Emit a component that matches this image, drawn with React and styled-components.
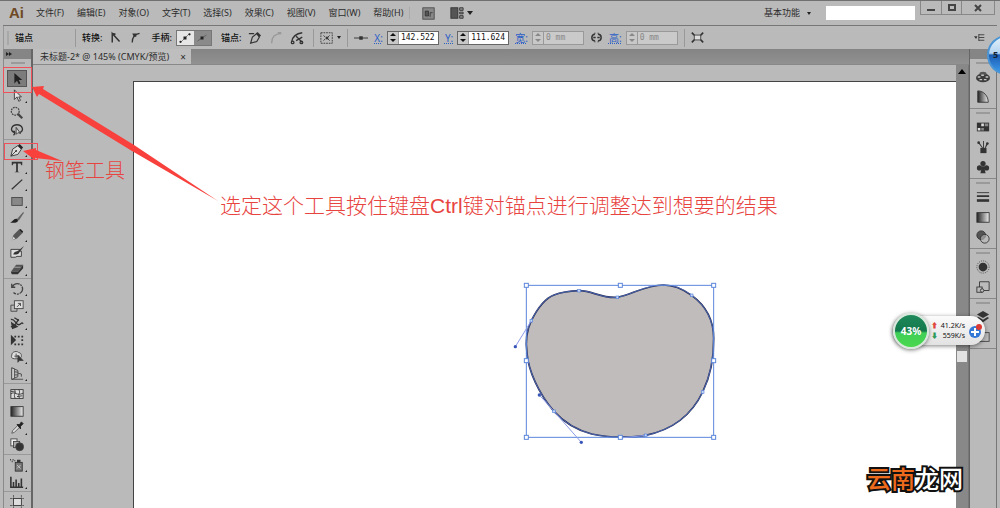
import React from 'react'
import styled, { createGlobalStyle } from 'styled-components'

const menus = ['文件(F)', '编辑(E)', '对象(O)', '文字(T)', '选择(S)', '效果(C)', '视图(V)', '窗口(W)', '帮助(H)']

// flyout: little corner mark for tools with a hidden group
const toolGroups = [
  [
    { icon: 'select', label: '选择工具', active: true },
    { icon: 'direct', label: '直接选择工具', flyout: true },
    { icon: 'wand', label: '魔棒工具' },
    { icon: 'lasso', label: '套索工具' },
  ],
  [
    { icon: 'pen', label: '钢笔工具', flyout: true },
    { icon: 'type', label: '文字工具', flyout: true },
    { icon: 'line', label: '直线段工具', flyout: true },
    { icon: 'rect', label: '矩形工具', flyout: true },
    { icon: 'brush', label: '画笔工具' },
    { icon: 'pencil', label: '铅笔工具', flyout: true },
    { icon: 'blob', label: '斑点画笔工具' },
    { icon: 'eraser', label: '橡皮擦工具', flyout: true },
  ],
  [
    { icon: 'rotate', label: '旋转工具', flyout: true },
    { icon: 'scale', label: '比例缩放工具', flyout: true },
    { icon: 'width', label: '宽度工具', flyout: true },
    { icon: 'transform', label: '自由变换工具' },
    { icon: 'shape', label: '形状生成器工具', flyout: true },
    { icon: 'perspective', label: '透视网格工具', flyout: true },
  ],
  [
    { icon: 'mesh', label: '网格工具' },
    { icon: 'gradient', label: '渐变工具' },
    { icon: 'dropper', label: '吸管工具', flyout: true },
    { icon: 'blend', label: '混合工具' },
  ],
  [
    { icon: 'spray', label: '符号喷枪工具', flyout: true },
    { icon: 'graph', label: '柱形图工具', flyout: true },
  ],
  [{ icon: 'artboard', label: '画板工具' }],
]

const panelGroups = [
  [['palette', '颜色'], ['guide', '颜色参考']],
  [['swatches', '色板'], ['brushes', '画笔'], ['club', '符号']],
  [['stroke', '描边'], ['gradient', '渐变'], ['opacity', '透明度']],
  [['appearance', '外观'], ['styles', '图形样式']],
  [['layers', '图层'], ['artboards', '画板']],
]

const icons = {
  select: <path d="M5 1v12l3-3 2 4 2-1-2-4h4z" fill="#222" />,
  direct: <path d="M5 1v11l3-3 2 5 2-1-2-4h3z" fill="#e4e4e4" stroke="#333" />,
  wand: <g stroke="#444" fill="none"><circle cx="6" cy="6" r="4.5" strokeWidth="1.4" strokeDasharray="2 1" /><path d="M9 9l5 5" strokeWidth="2.6" /></g>,
  lasso: <g stroke="#333" strokeWidth="1.5" fill="none"><path d="M5 11C-1 9 2 2 8 2s9 7 3 9M4 9c2 1 2 3 0 5" /><path d="M7 5v8l2-2 3 1z" fill="#ddd" strokeWidth="1" /></g>,
  pen: <g><path d="M1 15L3 7l6-4 4 4-4 6z" fill="#ddd" stroke="#333" /><path d="M9 3l2-2 4 4-2 2z" fill="#222" /><path d="M1 15l6-6" stroke="#333" /><circle cx="7" cy="9" r="1" fill="#222" /></g>,
  type: <path d="M2 2h12v4h-1l-1-2H9v9l2 1H5l2-1V4H4L3 6H2z" fill="#333" />,
  line: <path d="M2 14L14 3" stroke="#333" strokeWidth="1.5" />,
  rect: <rect x="2" y="4" width="12" height="9" fill="#888" stroke="#444" />,
  brush: <g><path d="M8 9l7-8 1 1-6 9z" fill="#666" /><path d="M0 13c3 0 4-5 8-4 3 2 0 6-8 4z" fill="#222" /></g>,
  pencil: <g><path d="M2 14l2-6 6-6 4 4-6 6z" fill="#555" /><path d="M10 2l2-1 3 3-1 2z" fill="#222" /><path d="M2 14l2-4 2 2z" fill="#ddd" /></g>,
  blob: <g><path d="M1 5h10v2h2v6H8l-2 1H1z" fill="#ddd" stroke="#333" /><path d="M4 11c0-4 4-3 6-5l6-5-5 7c-1 3-4 3-7 3z" fill="#333" /></g>,
  eraser: <g><path d="M1 11l6-8h8l-6 8z" fill="#555" /><path d="M1 11h8l6-8v4l-6 7H2z" fill="#333" /><path d="M5 6h7" stroke="#aaa" /></g>,
  rotate: <path d="M3 5a6 6 0 1 1 1 7M2 2v4h4" fill="none" stroke="#444" strokeWidth="1.5" strokeDasharray="9 1 2 1" />,
  scale: <g fill="none" stroke="#444"><path d="M1 7h7v7H1z" /><rect x="5" y="2" width="10" height="9" fill="#ddd" /><path d="M8 9l4-4M9 5h3v3" /></g>,
  width: <g fill="none" stroke="#333" strokeWidth="1.5"><path d="M1 4c5-1 5 6 9 6 3 0 3-4 5-1M1 12c4 2 6-5 9-8" /><path d="M2 8l6 4-5 2z" fill="#333" /><path d="M5 2l5 3" /></g>,
  transform: <g fill="#333"><path d="M1 2v12l6-6z" /><path d="M5 3h2v2H5zM9 3h2v2H9zM13 3h2v2h-2zM13 7h2v2h-2zM13 12h2v2h-2zM9 12h2v2H9zM5 12h2v2H5z" /></g>,
  shape: <g stroke="#444"><path d="M2 6c0-5 7-5 8-3 4 0 4 7 0 7H5C2 10 1 8 2 6z" fill="#ddd" /><path d="M5 7h6M7 4v5" fill="none" /><path d="M9 6v8l2-2h4z" fill="#333" /></g>,
  perspective: <g fill="none" stroke="#444"><path d="M2 1v13h13M2 1l7 3v7l-7 3M2 5l7 1M2 9h7M9 7l4 1v3" /><path d="M2 1l3 1v11l-3 1z" fill="#ddd" /></g>,
  mesh: <g fill="none" stroke="#333"><rect x="1" y="3" width="14" height="10" fill="#ddd" /><path d="M1 8c4-4 7 3 14-1M5 3c3 4-2 5 1 10M10 3c3 4-2 5 1 10M1 5h3l2 1M8 11l6-1" /></g>,
  gradient: <rect x="1" y="3" width="14" height="11" fill="url(#ramp)" stroke="#333" />,
  dropper: <g><path d="M2 14l1-3 6-6 2 2-6 6z" fill="#ddd" stroke="#555" /><path d="M8 4h3l2-3 2 2-3 3v3z" fill="#222" stroke="#222" /></g>,
  blend: <g stroke="#444"><rect x="1" y="1" width="7" height="8" fill="#eee" /><rect x="4" y="4" width="7" height="7" fill="#aaa" /><circle cx="11" cy="10" r="4.5" fill="#333" /></g>,
  spray: <g><rect x="6" y="5" width="8" height="10" fill="#777" stroke="#333" /><path d="M8 2h4v3H8z" fill="#333" /><path d="M0 2h1M3 2h1M5 3h1M2 4h1" stroke="#333" strokeWidth="1.5" /><path d="M8 8l4 4M12 8l-4 4" stroke="#ccc" /></g>,
  graph: <path d="M1 2v12h14M4 14V8M7 14V5M10 14V9M13 14V4" fill="none" stroke="#333" strokeWidth="1.8" />,
  artboard: <g fill="none" stroke="#555"><rect x="4" y="4" width="9" height="8" fill="#ddd" stroke="#333" /><path d="M4 0v3M13 0v3M4 13v3M13 13v3M0 4h3M0 12h3M14 4h2M14 12h2" /></g>,
  palette: <g><ellipse cx="8" cy="9" rx="8" ry="5" fill="#3c3c3c" /><ellipse cx="8" cy="4" rx="4" ry="2" fill="#555" /><path d="M2 8h3M6 6h3M11 8h3M4 11h3M9 11h3" stroke="#c4c4c4" strokeWidth="1.6" /></g>,
  guide: <path d="M2 14V1c7 0 12 6 12 13z" fill="url(#ramp)" stroke="#333" />,
  swatches: <g><rect x="1" y="3" width="14" height="10" fill="#333" /><path d="M6 4h3v3H6zM2 9h3v3H2z" fill="#ddd" /><path d="M10 4h4v3h-4zM6 9h3v3H6z" fill="#888" /></g>,
  brushes: <g fill="#333"><rect x="5" y="9" width="7" height="6" /><path d="M7 9L3 4l1-1 4 6zM8 9V1h1v8zM10 9l2-5h2l-3 5z" /><circle cx="3" cy="3" r="1.5" /><circle cx="13" cy="4" r="1.5" /></g>,
  club: <g fill="#333"><circle cx="8" cy="4" r="3" /><circle cx="4" cy="9" r="3" /><circle cx="12" cy="9" r="3" /><path d="M7 7h2l2 8H5z" /></g>,
  stroke: <g stroke="#333"><path d="M1 3h14" /><path d="M1 7h14" strokeWidth="2" /><path d="M1 12h14" strokeWidth="3" /></g>,
  opacity: <g stroke="#333"><circle cx="6" cy="6" r="5" fill="#555" /><circle cx="10" cy="10" r="5" fill="#bbb" fillOpacity=".6" /></g>,
  appearance: <g><circle cx="8" cy="8" r="7" fill="none" stroke="#333" strokeDasharray="1 1.5" /><circle cx="8" cy="8" r="5" fill="#333" /></g>,
  styles: <g fill="#bbb" stroke="#333"><path d="M4 2h11v10H4z" /><rect x="1" y="8" width="6" height="6" /><circle cx="7" cy="12" r="2" /></g>,
  layers: <g fill="#333"><path d="M8 1l7 4-7 4-7-4z" /><path d="M1 9l2-1 5 3 5-3 2 1-7 5z" /></g>,
  artboards: <rect x="1" y="3" width="14" height="10" fill="#bbb" stroke="#444" />,
  corner: <path d="M4 14V3l9 10M4 3l4 1" fill="none" stroke="#333" strokeWidth="1.8" />,
  smooth: <g><path d="M4 14C4 8 7 4 13 3" fill="none" stroke="#333" strokeWidth="1.6" /><path d="M4 3h5v4H6z" fill="#333" /></g>,
  handleShow: <g fill="#222"><path d="M2 14L14 2" stroke="#666" /><path d="M6 6h4v4H6z" /><circle cx="2" cy="13" r="1.5" /><circle cx="14" cy="3" r="1.5" /></g>,
  handleHide: <g fill="#222"><path d="M2 12l12-8" stroke="#555" /><path d="M6 6h4v4H6z" /></g>,
  penRemove: <g fill="none" stroke="#333" strokeWidth="1.3"><path d="M1 3h6M3 14L5 7l5-4 3 4-3 5z" /><path d="M10 2l4 4" strokeWidth="2.6" /></g>,
  joinEnds: <path d="M3 14C3 7 7 3 14 3M10 2h4" fill="none" stroke="#999" strokeWidth="1.5" />,
  cut: <g fill="none" stroke="#333" strokeWidth="1.5"><path d="M2 12C3 6 7 3 14 2M7 6l7 7M14 7l-7 4" /><circle cx="3" cy="13" r="1.5" /><circle cx="13" cy="13" r="1.5" /></g>,
  isolate: <g fill="none" stroke="#333"><rect x="1" y="2" width="13" height="12" strokeDasharray="2 1" /><path d="M4 5l2 2M11 5L9 7M4 11l2-2M11 11L9 9" /><path d="M7 7h2v2H7z" fill="#333" /></g>,
  anchor: <g fill="#333"><path d="M0 8h16" stroke="#555" strokeWidth="1.4" /><path d="M6 6h4v4H6z" /></g>,
  link: <g fill="none" stroke="#333" strokeWidth="1.8"><path d="M6 4C1 4 1 12 6 12M10 4c5 0 5 8 0 8M4 8h3M9 8h3" /><path d="M6 2v2M10 2v2M6 12v2M10 12v2" strokeWidth="1" /></g>,
  bounds: <g fill="none" stroke="#333"><rect x="4" y="5" width="8" height="6" fill="#ddd" /><path d="M1 2l3 3M15 2l-3 3M1 14l3-3M15 14l-3-3" strokeWidth="2" /></g>,
  panelMenu: <g fill="#333"><path d="M0 6h5l-2 4z" /><path d="M7 4h8M7 8h8M7 12h8M7 3v10" stroke="#333" strokeWidth="1.2" /></g>,
  bridge: <g><rect x="1" y="1" width="14" height="14" fill="#888" stroke="#444" /><path d="M4 5h4v6H4zM10 7h3M10 7v5" stroke="#333" fill="#555" /></g>,
  arrange: <g fill="#555" stroke="#333"><rect x="1" y="2" width="8" height="12" /><path d="M11 2h4v3h-4zM11 7h4v2h-4zM11 11h4v3h-4z" fill="#888" /></g>,
}

const applePath = 'M94 152C115 110 135 85 162 75C185 66 210 63 237 62C275 61 305 86 352 82C395 74 435 46 490 45C525 45 550 58 575 76C615 105 641 150 641 205C642 265 628 325 608 366C575 435 515 480 437 496C400 503 330 505 275 492C230 480 190 455 162 424C115 370 85 300 81 250C76 215 78 185 94 152Z'
const boxHandles = [[79, 46], [361, 46], [641, 46], [79, 272], [641, 272], [79, 502], [361, 502], [641, 502]]
const anchors = [[94, 152], [237, 62], [352, 82], [575, 76], [608, 366], [437, 496], [162, 424]]
const directionPoints = [[46, 230], [118, 375], [244, 517]]

const Icon = ({ name, size = 13 }) => (
  <svg width={size} height={size} viewBox="0 0 16 16" aria-hidden="true">{icons[name]}</svg>
)

const Stepper = ({ id, label, value, off }) => (
  <Field>
    <FieldLabel htmlFor={id}>{label}</FieldLabel>
    <Spin $off={off}>
      <SpinButtons>
        <SpinButton aria-label="增加" disabled={off}><svg width="6" height="3"><path d="M0 3l3-3 3 3z" /></svg></SpinButton>
        <SpinButton aria-label="减少" disabled={off}><svg width="6" height="3"><path d="M0 0h6L3 3z" /></svg></SpinButton>
      </SpinButtons>
      <SpinInput id={id} defaultValue={value} disabled={off} />
    </Spin>
  </Field>
)

const Apple = () => (
  <Drawing viewBox="0 0 720 555" aria-label="路径">
    <path d={applePath} fill="#c0bcbc" stroke="#24284e" strokeWidth="5" />
    <path d={applePath} fill="none" stroke="#5b82e0" strokeWidth="2" />
    <g fill="none" stroke="#5b86dc" strokeWidth="3">
      <path d="M79 46H641V502H79Z" />
      <path d="M94 152L46 230M118 375L162 424L244 517M361 504L437 496" stroke="#8a9be6" />
    </g>
    {boxHandles.map(([x, y]) => (
      <rect key={`${x}-${y}`} x={x - 6} y={y - 6} width="12" height="12" fill="#fff" stroke="#5b86dc" strokeWidth="3" />
    ))}
    {anchors.map(([x, y]) => (
      <rect key={`${x}-${y}`} x={x - 4} y={y - 4} width="8" height="8" fill="#c5d6f6" stroke="#5b86dc" strokeWidth="2" />
    ))}
    {directionPoints.map(([x, y]) => (
      <circle key={`${x}-${y}`} cx={x} cy={y} r="5" fill="#3a55b8" />
    ))}
  </Drawing>
)

const App = () => (
  <Window>
    <GlobalStyle />
    <Defs width="0" height="0" aria-hidden="true">
      <defs>
        <linearGradient id="ramp"><stop offset="0" stopColor="#222" /><stop offset="1" stopColor="#eee" /></linearGradient>
      </defs>
    </Defs>

    <MenuBar>
      <Logo>Ai</Logo>
      <Menus>
        {menus.map(m => <MenuButton key={m}>{m}</MenuButton>)}
      </Menus>
      <Rule $faint />
      <AppButtons>
        <IconButton aria-label="Bridge"><Icon name="bridge" /></IconButton>
        <IconButton aria-label="排列文档"><Icon name="arrange" size={14} /><Caret $big /></IconButton>
      </AppButtons>
      <Spacer />
      <Workspace>基本功能<Caret /></Workspace>
      <Search aria-label="搜索" />
      <WindowButtons>
        <WindowButton aria-label="最小化"><svg width="8" height="8"><path d="M0 6h8" stroke="#444" strokeWidth="2" /></svg></WindowButton>
        <WindowButton aria-label="最大化"><svg width="8" height="8"><path d="M1 1h6v5H1z" fill="none" stroke="#444" strokeWidth="2" /></svg></WindowButton>
        <WindowButton $wide aria-label="关闭"><svg width="8" height="8"><path d="M1 1l6 6M7 1L1 7" stroke="#444" strokeWidth="2" /></svg></WindowButton>
      </WindowButtons>
    </MenuBar>

    <ControlBar>
      <Grip $upright />
      <Title>锚点</Title>
      <Rule />
      <Group>
        <Label>转换:</Label>
        <IconButton aria-label="尖角"><Icon name="corner" /></IconButton>
        <IconButton aria-label="平滑"><Icon name="smooth" /></IconButton>
      </Group>
      <Group $tight>
        <Label>手柄:</Label>
        <Toggle>
          <ToggleButton $on aria-label="显示手柄"><Icon name="handleShow" size={12} /></ToggleButton>
          <ToggleButton aria-label="隐藏手柄"><Icon name="handleHide" size={12} /></ToggleButton>
        </Toggle>
      </Group>
      <Group>
        <Label>锚点:</Label>
        <IconButton aria-label="删除锚点"><Icon name="penRemove" size={14} /></IconButton>
        <IconButton aria-label="连接终点"><Icon name="joinEnds" size={14} /></IconButton>
        <IconButton aria-label="剪切路径"><Icon name="cut" size={14} /></IconButton>
      </Group>
      <Rule />
      <IconButton aria-label="隔离"><Icon name="isolate" size={14} /><Caret /></IconButton>
      <Rule />
      <IconButton aria-label="参考点"><Icon name="anchor" size={14} /></IconButton>
      <Stepper id="x" label="X:" value="142.522 cm" />
      <Stepper id="y" label="Y:" value="111.624 cm" />
      <Stepper id="w" label="宽:" value="0 mm" off />
      <IconButton aria-label="约束比例"><Icon name="link" /></IconButton>
      <Stepper id="h" label="高:" value="0 mm" off />
      <Rule />
      <IconButton aria-label="边界"><Icon name="bounds" /></IconButton>
      <Spacer />
      <IconButton aria-label="面板菜单"><Icon name="panelMenu" size={11} /></IconButton>
    </ControlBar>

    <Main>
      <Tools>
        <PanelHead>
          <svg width="6" height="4"><path d="M0 0l3 2-3 2zM3 0l3 2-3 2z" fill="#222" /></svg>
        </PanelHead>
        <GripRow><Grip /></GripRow>
        {toolGroups.map(group => (
          <ToolGroup key={group[0].icon}>
            {group.map(t => (
              <Tool key={t.icon} $active={t.active} $flyout={t.flyout} aria-label={t.label}>
                <Icon name={t.icon} size={14} />
              </Tool>
            ))}
          </ToolGroup>
        ))}
      </Tools>

      <Document>
        <TabBar>
          <Tab>未标题-2* @ 145% (CMYK/预览)<TabClose aria-label="关闭">×</TabClose></Tab>
        </TabBar>
        <View>
          <Pasteboard>
            <Artboard><Apple /></Artboard>
          </Pasteboard>
          <ScrollBar>
            <ScrollUp aria-label="向上"><svg width="8" height="5"><path d="M0 5L4 0l4 5z" fill="#000" /></svg></ScrollUp>
            <ScrollThumb />
          </ScrollBar>
        </View>
      </Document>

      <Dock>
        <PanelHead />
        {panelGroups.map(group => (
          <DockGroup key={group[0][0]}>
            <Grip />
            {group.map(([icon, label]) => (
              <DockButton key={icon} aria-label={label}><Icon name={icon} size={14} /></DockButton>
            ))}
          </DockGroup>
        ))}
      </Dock>
    </Main>

    <Marks width="230" height="210" aria-hidden="true">
      <g fill="none" stroke="#f0505a">
        <rect x="3.5" y="67.5" width="28" height="25" />
        <rect x="4.5" y="143.5" width="33" height="16" />
      </g>
      <g fill="#f8403c">
        <path d="M32 87l12-1-1 3 91 56 84 56-86-50-93-57-2 3z" />
        <path d="M23 151l13-3v2l26 11-27-3v2z" />
      </g>
    </Marks>
    <PenNote>钢笔工具</PenNote>
    <CtrlNote>选定这个工具按住键盘<b>Ctrl</b>键对锚点进行调整达到想要的结果</CtrlNote>

    <Monitor>
      <Percent>43%</Percent>
      <Rates>
        <Rate><Arrow $color="#e0483c">⬆</Arrow>41.2K/s</Rate>
        <Rate><Arrow $color="#2f9a5c">⬇</Arrow>559K/s</Rate>
      </Rates>
      <svg width="16" height="16" viewBox="0 0 16 16" aria-hidden="true">
        <circle cx="6" cy="9" r="6" fill="#3478d8" />
        <path d="M6 5v8M2 9h8" stroke="#fff" strokeWidth="2" />
        <circle cx="10" cy="4" r="3" fill="#dc3a34" />
      </svg>
    </Monitor>
    <Ball>5</Ball>
    <Watermark><span>云南</span>龙网</Watermark>
  </Window>
)

export default App

const GlobalStyle = createGlobalStyle`
  * { box-sizing: border-box; }
  body {
    margin: 0;
    background: #bababa;
    color: #2c2c2c;
    font: 9px/12px "Noto Sans", "Noto Sans CJK SC", sans-serif;
  }
  button, input {
    font: inherit;
    color: inherit;
    border: none;
    background: none;
    padding: 0;
    margin: 0;
  }
  svg { display: block; flex: none; }
`

const Window = styled.div`
  position: relative;
  display: flex;
  flex-direction: column;
  height: 100vh;
  overflow: hidden;
  padding: 0 3px;
  border-top: 1px solid #707070;
`

const Defs = styled.svg`
  position: absolute;
`

const MenuBar = styled.header`
  display: flex;
  align-items: center;
  flex: none;
  height: 25px;
  padding-left: 6px;
  border-bottom: 1px solid #777;
`

const Logo = styled.div`
  width: 27px;
  color: #6e4a26;
  font: bold 15px/20px "Liberation Sans", sans-serif;
`

const Menus = styled.nav`
  display: flex;
  gap: 13px;
  margin-right: 6px;
`

const MenuButton = styled.button`
  white-space: nowrap;
`

const Rule = styled.div`
  flex: none;
  width: 1px;
  height: ${props => (props.$faint ? 12 : 18)}px;
  background: ${props => (props.$faint ? '#aaa' : '#999')};
`

const AppButtons = styled.div`
  display: flex;
  gap: 15px;
  padding-left: 12px;
`

const IconButton = styled.button`
  display: flex;
  align-items: center;
  gap: 3px;
`

const Caret = styled.span`
  border: ${props => (props.$big ? 3 : 2)}px solid transparent;
  border-top: ${props => (props.$big ? 4 : 3)}px solid #222;
  border-bottom: none;
`

const Spacer = styled.div`
  flex: 1;
`

const Workspace = styled.button`
  display: flex;
  align-items: center;
  gap: 7px;
  margin-right: 15px;
`

const Search = styled.input`
  width: 89px;
  height: 14px;
  background: #fff;
`

const WindowButtons = styled.div`
  display: flex;
  align-self: flex-start;
  margin: 0 2px 0 5px;
  border: 1px solid #888;
  border-top: none;
`

const WindowButton = styled.button`
  display: grid;
  place-items: center;
  width: ${props => (props.$wide ? 33 : 20)}px;
  height: 13px;
  & + & { border-left: 1px solid #888; }
`

const ControlBar = styled.div`
  display: flex;
  align-items: center;
  flex: none;
  gap: 6px;
  height: 23px;
  padding: 0 12px 0 3px;
  border-left: 1px solid #999;
`

const Title = styled.div`
  width: 54px;
  font-weight: 500;
  color: #111;
`

const Group = styled.div`
  display: flex;
  align-items: center;
  gap: ${props => (props.$tight ? 4 : 7)}px;
  margin-right: 3px;
`

const Label = styled.span`
  white-space: nowrap;
  font-weight: 500;
  color: #111;
`

const Toggle = styled.div`
  display: flex;
  border: 1px solid #777;
`

const ToggleButton = styled.button`
  display: grid;
  place-items: center;
  width: 17px;
  height: 14px;
  background: ${props => (props.$on ? '#e6e6e6' : '#8a8a8a')};
`

const Field = styled.div`
  display: flex;
  align-items: center;
  gap: 4px;
`

const FieldLabel = styled.label`
  white-space: nowrap;
  font-size: 10px;
  color: #2c60c8;
  text-decoration: underline dotted;
`

const Spin = styled.div`
  display: flex;
  width: 52px;
  height: 14px;
  border: 1px solid ${props => (props.$off ? '#999' : '#666')};
  background: ${props => (props.$off ? '#cacaca' : '#fff')};
  color: ${props => (props.$off ? '#888' : '#111')};
`

const SpinButtons = styled.div`
  display: flex;
  flex-direction: column;
  flex: none;
  width: 11px;
  border-right: 1px solid #999;
  background: #c8c8c8;
`

const SpinButton = styled.button`
  display: grid;
  place-items: center;
  flex: 1;
  svg { fill: currentColor; }
`

const SpinInput = styled.input`
  flex: 1;
  min-width: 0;
  padding-left: 2px;
  font: 8px/12px "DejaVu Sans Mono", monospace;
`

const Main = styled.main`
  display: flex;
  flex: 1;
  min-height: 0;
`

const Tools = styled.aside`
  display: flex;
  flex-direction: column;
  flex: none;
  width: 30px;
  overflow: hidden;
  border-left: 1px solid #8a8a8a;
  border-right: 2px solid #666;
`

const PanelHead = styled.div`
  flex: none;
  height: 10px;
  padding: 3px 2px;
  background: #858585;
`

const GripRow = styled.div`
  flex: none;
  display: flex;
  justify-content: center;
  height: 10px;
  padding-top: 3px;
`

const Grip = styled.div`
  flex: none;
  width: ${props => (props.$upright ? '2px' : '14px')};
  height: ${props => (props.$upright ? '14px' : '2px')};
  background: ${props => (props.$upright ? '#a8a8a8' : '#9a9a9a')};
`

const ToolGroup = styled.div`
  flex: none;
  padding: 1px 3px;
  border-bottom: 1px solid #999;
  ${GripRow} + & { border-top: none; }
`

const Tool = styled.button`
  position: relative;
  display: grid;
  place-items: center;
  width: 20px;
  height: 17px;
  background: ${props => (props.$active ? '#7c7c7c' : 'none')};
  box-shadow: ${props => (props.$active ? 'inset 0 0 0 1px #555' : 'none')};
  &::after {
    content: '';
    display: ${props => (props.$flyout ? 'block' : 'none')};
    position: absolute;
    right: 0;
    bottom: 1px;
    border: 1px solid #222;
    border-top-color: transparent;
    border-left-color: transparent;
  }
`

const Document = styled.section`
  display: flex;
  flex-direction: column;
  flex: 1;
  min-width: 0;
`

const TabBar = styled.div`
  display: flex;
  flex: none;
  height: 16px;
  background: linear-gradient(#848484, #919191);
  border-bottom: 1px solid #888;
`

const Tab = styled.div`
  display: flex;
  align-items: center;
  gap: 11px;
  padding: 0 5px 0 7px;
  white-space: nowrap;
  background: #bebebe;
`

const TabClose = styled.button`
  font-size: 10px;
`

const View = styled.div`
  display: flex;
  flex: 1;
  min-height: 0;
`

const Pasteboard = styled.div`
  display: flex;
  flex: 1;
  min-width: 0;
  padding: 16px 0 0 100px;
`

const Artboard = styled.div`
  position: relative;
  flex: 1;
  background: #fff;
  border: 1px solid #444;
  border-right: none;
  border-bottom: none;
  overflow: hidden;
`

const Drawing = styled.svg`
  position: absolute;
  left: 366px;
  top: 188px;
  width: 240px;
  height: 185px;
`

const ScrollBar = styled.div`
  display: flex;
  flex-direction: column;
  align-items: center;
  gap: 274px;
  width: 13px;
  background: #888;
  border-right: 1px solid #777;
`

const ScrollUp = styled.button`
  display: grid;
  place-items: center;
  width: 100%;
  height: 12px;
`

const ScrollThumb = styled.div`
  width: 10px;
  height: 11px;
  background: #e2e2e2;
`

const Dock = styled.aside`
  flex: none;
  width: 28px;
  border-left: 1px solid #666;
  border-right: 1px solid #777;
`

const DockGroup = styled.div`
  display: flex;
  flex-direction: column;
  align-items: center;
  padding: 3px 0 1px;
  border-bottom: 1px solid #888;
`

const DockButton = styled.button`
  display: grid;
  place-items: center;
  width: 24px;
  height: 20px;
  ${Grip} + & { margin-top: 3px; }
`

const Marks = styled.svg`
  position: absolute;
  left: 0;
  top: -1px;
  pointer-events: none;
`

const Note = styled.p`
  position: absolute;
  margin: 0;
  white-space: nowrap;
  color: #e8443f;
  font-family: "Liberation Sans", "Noto Sans CJK SC", sans-serif;
  font-weight: 300;
`

const PenNote = styled(Note)`
  left: 45px;
  top: 158px;
  font-size: 20px;
  line-height: 24px;
`

const CtrlNote = styled(Note)`
  left: 220px;
  top: 192px;
  font-size: 21px;
  line-height: 26px;
  b { font-weight: 500; }
`

const Monitor = styled.div`
  position: absolute;
  right: 15px;
  top: 315px;
  display: flex;
  align-items: center;
  width: 92px;
  height: 29px;
  border-radius: 15px;
  background: linear-gradient(#fbfbfb, #e2e2e2);
  box-shadow: 0 1px 4px rgba(0, 0, 0, 0.5);
`

const Percent = styled.div`
  flex: none;
  width: 36px;
  height: 36px;
  border: 2px solid #d8e8dc;
  border-radius: 50%;
  background: linear-gradient(#1f8a5c 0, #12784c 50%, #3fcf56 56%, #4ad84e 100%);
  box-shadow: 0 1px 4px rgba(0, 0, 0, 0.5);
  color: #fff;
  font: bold 10px/32px "Noto Sans", sans-serif;
  text-align: center;
`

const Rates = styled.div`
  flex: 1;
  padding: 0 4px 0 2px;
`

const Rate = styled.div`
  display: flex;
  justify-content: space-between;
  font-size: 7px;
  line-height: 10px;
  color: #111;
`

const Arrow = styled.span`
  color: ${props => props.$color};
`

const Ball = styled.div`
  position: absolute;
  right: -27px;
  top: 34px;
  width: 40px;
  height: 40px;
  padding-left: 4px;
  border: 2px solid #4a94d4;
  border-radius: 50%;
  background: linear-gradient(#e4f0fa 0, #b4d4f0 45%, #1c5cb4 50%, #3c9cec 100%);
  color: #123;
  font: bold 9px/36px "Noto Sans", sans-serif;
`

const Watermark = styled.div`
  position: absolute;
  right: 37px;
  bottom: 16px;
  color: #fff;
  font: 500 24px/28px "Noto Sans CJK SC", sans-serif;
  -webkit-text-stroke: 4px #111;
  paint-order: stroke fill;
  span { color: #ee6a1c; }
`
